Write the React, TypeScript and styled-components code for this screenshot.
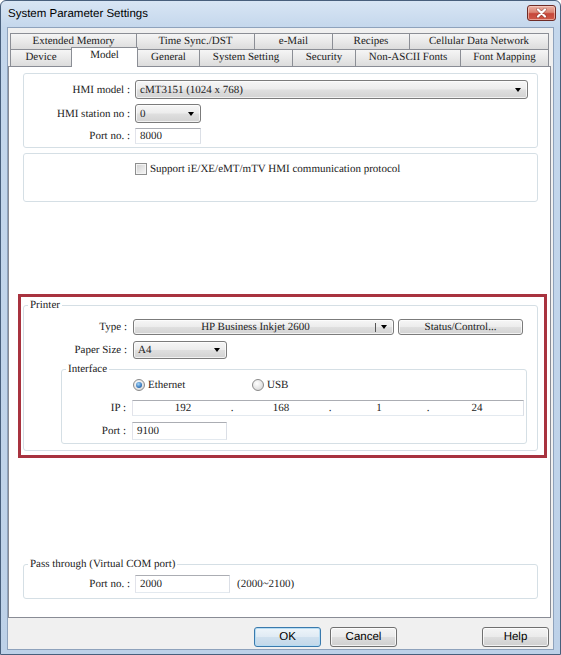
import React from 'react'
import styled, { createGlobalStyle, css } from 'styled-components'

const SERIF = `'Liberation Serif', 'Times New Roman', serif`
const SANS = `'Liberation Sans', Arial, sans-serif`

const GlobalStyle = createGlobalStyle`
  html, body {
    margin: 0;
    padding: 0;
    background: #ffffff;
    text-rendering: geometricPrecision;
  }
  * {
    box-sizing: border-box;
  }
`

const Window = styled.div`
  width: 561px;
  height: 655px;
  display: flex;
  flex-direction: column;
  background: linear-gradient(to bottom, #d8e5f4 0px, #c4d7ec 27px, #bdd1e8 100%);
  border: 1px solid #485f7c;
  border-radius: 6px 6px 0 0;
  overflow: hidden;
`

const TitleBar = styled.div`
  flex: none;
  height: 26px;
  display: flex;
  align-items: center;
  justify-content: space-between;
  padding: 0 4px 0 7px;
`

const Title = styled.span`
  font-family: ${SANS};
  font-size: 11.5px;
  color: #000;
`

const CloseButton = styled.div`
  align-self: flex-start;
  margin-top: 4px;
  width: 29px;
  height: 16px;
  border: 1px solid #6e2b26;
  border-radius: 3px;
  background: linear-gradient(to bottom, #eab0a4 0%, #dc8573 45%, #c6473a 55%, #cf5a48 100%);
  box-shadow: inset 0 0 0 1px rgba(255, 220, 210, 0.55);
  display: flex;
  align-items: center;
  justify-content: center;
`

const Client = styled.div`
  flex: 1;
  margin: 0 6px 4px;
  background: #f0f0f0;
  border: 1px solid #8ea2bc;
  display: flex;
  flex-direction: column;
  padding-top: 5px;
`

const TabRow = styled.div<{ $front?: boolean }>`
  display: flex;
  align-items: flex-start;
  height: ${p => (p.$front ? 17 : 16)}px;
  padding-left: 2px;
`

const Tab = styled.div<{ $w: number; $active?: boolean }>`
  width: ${p => p.$w + 1}px;
  height: 100%;
  border: 1px solid #8b8e95;
  border-bottom: none;
  background: linear-gradient(to bottom, #f5f5f5 0%, #e9e9e9 50%, #dcdcdc 100%);
  font-family: ${SERIF};
  font-size: 11px;
  line-height: 15px;
  text-align: center;
  color: #222;
  white-space: nowrap;
  & + & {
    margin-left: -1px;
  }
  ${p =>
    p.$active &&
    css`
      position: relative;
      z-index: 1;
      height: 20px;
      margin-top: -2px;
      background: #ffffff;
      line-height: 14px;
    `}
`

const Panel = styled.div`
  flex: 1;
  margin-right: 2px;
  background: #ffffff;
  border: 1px solid #898c95;
  display: flex;
  flex-direction: column;
  padding: 6px 12px 0 14px;
`

const GroupBox = styled.div`
  border: 1px solid #d5dfe5;
  border-radius: 3px;
`

const ModelBox = styled(GroupBox)`
  padding: 6px 9px 3px 0;
`

const ProtocolBox = styled(GroupBox)`
  margin-top: 5px;
  height: 49px;
  padding: 9px 0 0 111px;
  display: flex;
  align-items: flex-start;
  gap: 3px;
`

const FieldGroup = styled.fieldset`
  margin: 0;
  min-width: 0;
  border: 1px solid #d5dfe5;
  border-radius: 3px;
`

const Legend = styled.legend`
  margin-left: 4px;
  padding: 0 2px;
  font-family: ${SERIF};
  font-size: 11px;
  line-height: 12px;
  color: #222;
`

const PrinterGroup = styled(FieldGroup)`
  padding: 8px 10px 6px 0;
`

const InterfaceGroup = styled(FieldGroup)`
  grid-column: 1 / -1;
  margin: -2px 0 0 37px;
  padding: 4px 1px 3px 0;
`

const PassGroup = styled(FieldGroup)`
  margin-top: 100px;
  padding: 5px 0 5px 0;
`

const FormGrid = styled.div<{ $label: number; $gap: number; $rowGap?: number }>`
  display: grid;
  grid-template-columns: ${p => p.$label}px 1fr;
  column-gap: ${p => p.$gap}px;
  row-gap: ${p => p.$rowGap ?? 6}px;
  align-items: center;
`

const Label = styled.span`
  font-family: ${SERIF};
  font-size: 11px;
  color: #222;
  text-align: right;
  white-space: nowrap;
`

const Text = styled.span`
  font-family: ${SERIF};
  font-size: 11px;
  color: #222;
  white-space: nowrap;
`

const RangeText = styled(Text)`
  margin-left: 3px;
`

const Highlight = styled.div`
  margin: 92px -9px 0 -5px;
  border: 3px solid #a8333f;
  padding: 2px 6px 4px 2px;
`

const Combo = styled.div<{ $w?: number; $h: number }>`
  width: ${p => (p.$w ? `${p.$w}px` : 'auto')};
  height: ${p => p.$h}px;
  display: flex;
  align-items: center;
  border: 1px solid #7b7b7b;
  border-radius: 3px;
  background: linear-gradient(to bottom, #f6f6f6 0%, #ececec 48%, #dfdfdf 52%, #d2d2d2 100%);
  box-shadow: inset 0 0 0 1px rgba(255, 255, 255, 0.7);
  padding: 0 6px 0 4px;
  font-family: ${SERIF};
  font-size: 11px;
  color: #222;
`

const ComboText = styled.span<{ $center?: boolean }>`
  flex: 1;
  white-space: nowrap;
  text-align: ${p => (p.$center ? 'center' : 'left')};
`

const ComboSeparator = styled.span`
  width: 1px;
  height: 9px;
  background: #555;
  margin: 0 5px 0 2px;
`

const Arrow = styled.span`
  width: 0;
  height: 0;
  border-left: 3.5px solid transparent;
  border-right: 3.5px solid transparent;
  border-top: 4px solid #000;
`

const ControlRow = styled.div`
  display: flex;
  align-items: center;
  gap: 4px;
`

const PushButton = styled.div<{ $w: number; $h: number }>`
  width: ${p => p.$w}px;
  height: ${p => p.$h}px;
  border: 1px solid #7b7b7b;
  border-radius: 3px;
  background: linear-gradient(to bottom, #f6f6f6 0%, #ececec 48%, #dfdfdf 52%, #d2d2d2 100%);
  box-shadow: inset 0 0 0 1px rgba(255, 255, 255, 0.7);
  display: flex;
  align-items: center;
  justify-content: center;
  font-family: ${SERIF};
  font-size: 11px;
  color: #222;
`

const TextField = styled.div<{ $w?: number; $h: number }>`
  width: ${p => (p.$w ? `${p.$w}px` : 'auto')};
  height: ${p => p.$h}px;
  border: 1px solid;
  border-color: #abadb3 #dbdfe6 #e3e9ef #e2e3ea;
  background: #ffffff;
  display: flex;
  align-items: center;
  padding-left: 4px;
  font-family: ${SERIF};
  font-size: 11px;
  color: #222;
`

const IpField = styled(TextField)`
  display: grid;
  grid-template-columns: 1fr 6px 1fr 6px 1fr 6px 1fr;
  justify-items: center;
  margin-right: 1px;
`

const Checkbox = styled.span`
  width: 12px;
  height: 12px;
  flex: none;
  border: 1px solid #8e8f8f;
  background: linear-gradient(135deg, #cfcfcf 0%, #e8e8e8 60%, #f6f6f6 100%);
  box-shadow: inset 0 0 0 1px #f4f4f4;
`

const CheckText = styled(Text)`
  line-height: 12px;
`

const RadioRow = styled.div`
  grid-column: 2;
  display: flex;
  align-items: center;
  height: 12px;
  margin-bottom: 3px;
`

const RadioItem = styled.div<{ $w?: number }>`
  width: ${p => (p.$w ? `${p.$w}px` : 'auto')};
  display: flex;
  align-items: center;
  gap: 3px;
  padding-left: 1px;
`

const Radio = styled.span<{ $on?: boolean }>`
  position: relative;
  width: 12px;
  height: 12px;
  flex: none;
  border-radius: 50%;
  border: 1px solid #8a8a8a;
  background: radial-gradient(circle at 40% 35%, #ffffff 0%, #e6e6e6 55%, #cdcdcd 100%);
  ${p =>
    p.$on &&
    css`
      &::after {
        content: '';
        position: absolute;
        left: 2px;
        top: 2px;
        width: 6px;
        height: 6px;
        border-radius: 50%;
        background: radial-gradient(circle at 40% 35%, #a6d6f7 0%, #3a7bc0 60%, #1c4f86 100%);
      }
    `}
`

const ButtonBar = styled.div`
  flex: none;
  height: 31px;
  display: flex;
  align-items: flex-start;
  justify-content: flex-end;
  padding: 9px 4px 0 0;
  gap: 9px;
`

const DialogButton = styled.div<{ $default?: boolean; $push?: number }>`
  width: 67px;
  height: 20px;
  margin-left: ${p => p.$push ?? 0}px;
  border: 1px solid #707070;
  border-radius: 3px;
  background: linear-gradient(to bottom, #f4f4f4 0%, #ebebeb 48%, #dddddd 52%, #cfcfcf 100%);
  box-shadow: inset 0 0 0 1px rgba(255, 255, 255, 0.75);
  display: flex;
  align-items: center;
  justify-content: center;
  font-family: ${SANS};
  font-size: 11.5px;
  color: #000;
  ${p =>
    p.$default &&
    css`
      border-color: #3a7aad;
      background: linear-gradient(to bottom, #eef5fa 0%, #e0ebf4 48%, #cfe0ee 52%, #c3d8e9 100%);
      box-shadow: inset 0 0 0 1px #b6dcf3;
    `}
`

const backTabs: [string, number][] = [
  ['Extended Memory', 126],
  ['Time Sync./DST', 118],
  ['e-Mail', 78],
  ['Recipes', 77],
  ['Cellular Data Network', 139],
]

const frontTabs: [string, number][] = [
  ['Device', 61],
  ['Model', 66],
  ['General', 62],
  ['System Setting', 93],
  ['Security', 63],
  ['Non-ASCII Fonts', 105],
  ['Font Mapping', 88],
]

const ipOctets = ['192', '168', '1', '24']

export default function App() {
  return (
    <>
      <GlobalStyle />
      <Window>
        <TitleBar>
          <Title>System Parameter Settings</Title>
          <CloseButton>
            <svg width="11" height="10" viewBox="0 0 11 10">
              <path d="M2 1.5 L9 8.5 M9 1.5 L2 8.5" stroke="#5a1e1a" strokeWidth="3.4" strokeLinecap="round" opacity="0.45" />
              <path d="M2 1.5 L9 8.5 M9 1.5 L2 8.5" stroke="#ffffff" strokeWidth="2.2" strokeLinecap="round" />
            </svg>
          </CloseButton>
        </TitleBar>

        <Client>
          <TabRow>
            {backTabs.map(([name, w]) => (
              <Tab key={name} $w={w}>
                {name}
              </Tab>
            ))}
          </TabRow>
          <TabRow $front>
            {frontTabs.map(([name, w]) => (
              <Tab key={name} $w={w} $active={name === 'Model'}>
                {name}
              </Tab>
            ))}
          </TabRow>

          <Panel>
            <ModelBox>
              <FormGrid $label={106} $gap={5} $rowGap={5}>
                <Label>HMI model :</Label>
                <Combo $h={19}>
                  <ComboText>cMT3151 (1024 x 768)</ComboText>
                  <Arrow />
                </Combo>
                <Label>HMI station no :</Label>
                <Combo $w={66} $h={19}>
                  <ComboText>0</ComboText>
                  <Arrow />
                </Combo>
                <Label>Port no. :</Label>
                <TextField $w={66} $h={16}>8000</TextField>
              </FormGrid>
            </ModelBox>

            <ProtocolBox>
              <Checkbox />
              <CheckText>Support iE/XE/eMT/mTV HMI communication protocol</CheckText>
            </ProtocolBox>

            <Highlight>
              <PrinterGroup>
                <Legend>Printer</Legend>
                <FormGrid $label={103} $gap={6}>
                  <Label>Type :</Label>
                  <ControlRow>
                    <Combo $w={261} $h={16}>
                      <ComboText $center>HP Business Inkjet 2600</ComboText>
                      <ComboSeparator />
                      <Arrow />
                    </Combo>
                    <PushButton $w={125} $h={16}>Status/Control...</PushButton>
                  </ControlRow>
                  <Label>Paper Size :</Label>
                  <Combo $w={94} $h={18}>
                    <ComboText>A4</ComboText>
                    <Arrow />
                  </Combo>

                  <InterfaceGroup>
                    <Legend>Interface</Legend>
                    <FormGrid $label={64} $gap={6}>
                      <RadioRow>
                        <RadioItem $w={119}>
                          <Radio $on />
                          <Text>Ethernet</Text>
                        </RadioItem>
                        <RadioItem>
                          <Radio />
                          <Text>USB</Text>
                        </RadioItem>
                      </RadioRow>
                      <Label>IP :</Label>
                      <IpField $h={16}>
                        {ipOctets.map((o, i) => (
                          <React.Fragment key={i}>
                            {i > 0 && <span>.</span>}
                            <span>{o}</span>
                          </React.Fragment>
                        ))}
                      </IpField>
                      <Label>Port :</Label>
                      <TextField $w={95} $h={18}>9100</TextField>
                    </FormGrid>
                  </InterfaceGroup>
                </FormGrid>
              </PrinterGroup>
            </Highlight>

            <PassGroup>
              <Legend>Pass through (Virtual COM port)</Legend>
              <FormGrid $label={106} $gap={5}>
                <Label>Port no. :</Label>
                <ControlRow>
                  <TextField $w={95} $h={18}>2000</TextField>
                  <RangeText>(2000~2100)</RangeText>
                </ControlRow>
              </FormGrid>
            </PassGroup>
          </Panel>

          <ButtonBar>
            <DialogButton $default>OK</DialogButton>
            <DialogButton>Cancel</DialogButton>
            <DialogButton $push={76}>Help</DialogButton>
          </ButtonBar>
        </Client>
      </Window>
    </>
  )
}
